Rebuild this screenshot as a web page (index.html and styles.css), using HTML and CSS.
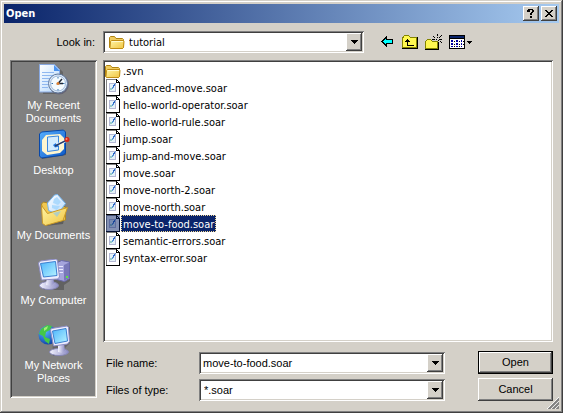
FILE: index.html
```
<!DOCTYPE html>
<html lang="en">
<head>
<meta charset="utf-8">
<title>Open</title>
<link rel="stylesheet" href="styles.css">
</head>
<body>
<svg class="defs" aria-hidden="true">
  <defs>
    <linearGradient id="gold" x1="0" y1="0" x2="1" y2="1"><stop offset="0" stop-color="#fff6a8"/><stop offset="1" stop-color="#f0c440"/></linearGradient>
    <linearGradient id="sheet" x1="0" y1="0" x2="1" y2="1"><stop offset="0" stop-color="#ffffff"/><stop offset="1" stop-color="#b4d8fc"/></linearGradient>
    <linearGradient id="screen" x1="0" y1="0" x2="1" y2="1"><stop offset="0" stop-color="#4cb4fc"/><stop offset="1" stop-color="#b8f4ff"/></linearGradient>
    <linearGradient id="blue" x1="0" y1="0" x2="1" y2="1"><stop offset="0" stop-color="#58b0ff"/><stop offset="1" stop-color="#0c58c8"/></linearGradient>
    <linearGradient id="metal" x1="0" y1="0" x2="1" y2="0"><stop offset="0" stop-color="#f4f4ff"/><stop offset="1" stop-color="#8c8cc4"/></linearGradient>
    <radialGradient id="globe" cx=".35" cy=".3" r=".8"><stop offset="0" stop-color="#58b8ff"/><stop offset="1" stop-color="#0838a0"/></radialGradient>
    <symbol id="folder" viewBox="0 0 16 16">
      <path fill="#f0cc60" stroke="#b08410" d="M.5 13.500V3.500l1-1h4l1.500 2h6.500l1 1v8l-1 1h-12z"/>
      <path fill="url(#gold)" stroke="#c08c14" d="M1.500 7.500l1-1h11.500l1 1-.5 6-1 1h-11.500l-1-1z"/>
      <path fill="none" stroke="#fffbd0" d="M3 7.500h11"/>
    </symbol>
    <symbol id="file" viewBox="0 0 14 17">
      <path fill="#fff" d="M1 1h9l3 3v12H1z"/>
      <path fill="#808080" d="M0 0h10v1H1v15H0z"/>
      <path fill="#000" d="M10 0h1v1h1v1h1v1h1v14H0v-1h13V4h-3z"/>
      <path fill="#fff" d="M11 2h1v1h-1z"/>
      <path fill="#b4b8d4" d="M3 4h7v9H3z"/>
      <path fill="#e4f2f8" d="M4 5h5v7H4z"/>
      <path fill="#2c68c8" d="M8 5h1v2H8zM7 6h1v2H7z"/>
      <path fill="#5c98d8" d="M6 8h2v1H6zM6 9h1v1H6zM9 4h1v1H9z"/>
      <path fill="#98ccc8" d="M4 9h2v2H4z"/>
    </symbol>
    <symbol id="drop" viewBox="0 0 7 4"><path d="M0 0h7v1H0zM1 1h5v1H1zM2 2h3v1H2zM3 3h1v1H3z"/></symbol>
  </defs>
</svg>

<header class="titlebar">
  <h1>Open</h1>
  <button class="btn caption" type="button" aria-label="Help"><svg width="8" height="9" viewBox="0 0 8 9"><path d="M1 0h5v1H1zM0 1h3v2H0zM5 1h2v2H5zM4 3h2v1H4zM3 4h2v2H3zM3 7h2v2H3z"/></svg></button>
  <button class="btn caption" type="button" aria-label="Close"><svg width="8" height="7" viewBox="0 0 8 7"><path d="M0 0h2v1H0zM6 0h2v1H6zM1 1h2v1H1zM5 1h2v1H5zM2 2h4v1H2zM3 3h2v1H3zM2 4h4v1H2zM1 5h2v1H1zM5 5h2v1H5zM0 6h2v1H0zM6 6h2v1H6z"/></svg></button>
</header>

<form class="dialog">
  <label class="lookin-label" for="lookin">Look in:</label>
  <div class="lookin">
    <div class="combo">
      <svg class="combo-icon" width="16" height="16"><use href="#folder"/></svg>
      <select id="lookin" class="with-icon"><option>tutorial</option></select>
      <span class="btn arrow"><svg width="7" height="4"><use href="#drop"/></svg></span>
    </div>
    <div class="tools">
      <button type="button" aria-label="Go to last folder visited"><svg width="14" height="12" viewBox="0 0 14 12"><path d="M5 0h1v3h6v5H6v3H5v-1H4V9H3V8H2V7H1V6H0V5h1V4h1V3h1V2h1V1h1z"/><path fill="#00ffff" d="M4 3h1v1h6v3H5v1H4V7H3V6H2V5h1V4h1z"/></svg></button>
      <button type="button" aria-label="Up one level"><svg width="16" height="14" viewBox="0 0 16 14"><path fill="#848400" d="M2 0h5v1h1v1h7v11H0V2h1V1h1z"/><path fill="#fff850" d="M2 1h5v1h1v1h6v9H1V3h1z"/><path d="M15 2h1v12H0v-1h15zM5 4h1v1h1v1h1v1H6v3h6v1H5V7H3V6h1V5h1z"/></svg></button>
      <button type="button" aria-label="Create new folder"><svg width="17" height="16" viewBox="0 0 17 16"><path fill="#848400" d="M2 5h4v1h1v1h6v8H0V7h1V6h1z"/><path fill="#fff850" d="M2 6h4v1h1v1h5v6H1V7h1z"/><path d="M13 8h1v8H0v-1h13zM12 0h1v2h-1zM8 2h1v1H8zM9 3h1v1H9zM16 1h1v1h-1zM15 2h1v1h-1zM14 3h1v1h-1zM12 3h1v1h-1zM7 5h3v1H7zM11 5h1v1h-1zM14 5h3v1h-3zM13 6h1v1h-1zM15 7h1v1h-1zM16 8h1v1h-1z"/></svg></button>
      <button type="button" aria-label="View menu"><svg width="23" height="14" viewBox="0 0 23 14"><path d="M0 0h16v14H0z"/><path fill="#0a246a" d="M1 1h14v2H1z"/><path fill="#fff" d="M1 4h14v9H1z"/><path fill="#0000a0" d="M2 5h2v2H2zM7 5h2v2H7zM12 5h1v2h-1zM2 8h2v2H2zM7 8h2v2H7zM12 8h1v2h-1zM2 11h2v1H2zM7 11h2v1H7zM12 11h1v1h-1z"/><path d="M5 6h1v1H5zM10 6h1v1h-1zM14 6h1v1h-1zM5 9h1v1H5zM10 9h1v1h-1zM14 9h1v1h-1zM5 11h1v1H5zM10 11h1v1h-1zM18 6h5v1h-5zM19 7h3v1h-3zM20 8h1v1h-1z"/></svg></button>
    </div>
  </div>

  <nav class="places" aria-label="Places">
    <a href="#"><svg width="32" height="32" viewBox="0 0 32 32">
      <path fill="#333" opacity=".35" d="M5 3h15l5 5v22H5z"/>
      <path fill="url(#sheet)" stroke="#88a8e0" d="M1.500.500h15l5 5v22.500h-20z"/>
      <path fill="#4c94f0" d="M16 1v6h6z"/>
      <path stroke="#90b8f0" d="M4 8.500h12M4 11.500h14M4 14.500h14M4 17.500h8M4 20.500h6M4 23.500h6"/>
      <circle cx="21" cy="20.500" r="10" fill="#667"/>
      <circle cx="20" cy="19.500" r="9.500" fill="#dceafa" stroke="#60789c"/>
      <circle cx="20" cy="19.500" r="7.500" fill="#f4fbff" stroke="#a0b8d8"/>
      <path stroke="#3070b0" fill="none" d="M20 13v1.500M20 25v1.500M13.500 19.500H15M25 19.500h1.500"/>
      <path fill="none" stroke="#202838" stroke-width="1.500" d="M24 15l-4 4.500h5"/><circle cx="20" cy="19.500" r="1.500" fill="#e08030"/>
    </svg><span>My Recent<br>Documents</span></a>
    <a href="#"><svg width="32" height="32" viewBox="0 0 32 32">
      <path fill="#333" opacity=".5" d="M3 5l25-2v23l-24 4z"/>
      <path fill="url(#blue)" stroke="#0848a8" d="M1.500 5l2-2 22-2 2 2v21l-2 2-22 3-2-2z"/>
      <path fill="#fff6d0" d="M8 6l14-1 4 4v11l-4 4-13 2-5-4V11z"/>
      <path fill="#d4ecff" stroke="#3c88e0" d="M9.500 8l11-1v14l-11 1.500z"/>
      <path fill="#2478e0" d="M15 16l3-2v1.500h3v2l-4 1z"/>
      <path stroke="#fff" stroke-width="3" d="M20 15.500l8-4"/><path stroke="#283c68" stroke-width="1.500" d="M17 17l11-5.500"/>
      <circle cx="29" cy="10.500" r="2.500" fill="#d82410"/><circle cx="28.500" cy="10" r="1" fill="#ff9078"/>
    </svg><span>Desktop</span></a>
    <a href="#"><svg width="32" height="32" viewBox="0 0 32 32">
      <path fill="#333" opacity=".45" d="M6 11l10-7 13 10-4 16-18 2z"/>
      <path fill="#f0c850" stroke="#b08820" d="M3.500 10l2-2 4 1 2 3 16 1v13l-20 4z"/>
      <path fill="url(#sheet)" stroke="#70b4f0" d="M9.500 9l7-8 3-.5 8 9-8 11-9-4z"/>
      <path fill="#a0d4fc" opacity=".8" d="M16 5l3-2 4 5-3 3-5-2zM14 11l8 1-3 4-5-2z"/>
      <path fill="url(#gold)" stroke="#c89828" d="M3.500 11.500l6 8 20-6-4.500 13-17.500 5-3-2z"/>
      <path fill="#80c4f8" opacity=".6" d="M15 19l8-2-4 6z"/>
    </svg><span>My Documents</span></a>
    <a href="#"><svg width="32" height="32" viewBox="0 0 32 32">
      <path fill="#333" opacity=".4" d="M20 4l12 2v16l-6 4v5H6l-2-6z"/>
      <path fill="#a4a4dc" stroke="#6868a8" d="M18.500 4l5-2.500 8 1.500v16.500l-5 3-8-2z"/>
      <path fill="#7878b8" d="M26 6l5-2.500V19l-5 3z"/><path stroke="#e8e8ff" d="M20 7.500h5M20 10.500h5M20 13.500h5"/><path fill="#58e840" d="M28 17h2v2h-2z"/>
      <ellipse cx="11" cy="26.500" rx="9.500" ry="4" fill="url(#metal)" stroke="#8888b8"/>
      <path fill="url(#metal)" d="M9 17l6-1 1 8-3 3-5-1z"/>
      <path fill="#eeeeff" stroke="#8c8cc4" d="M.500 4l2-2 16-2 1 2 2 16-2 2-16 1z"/>
      <path fill="url(#screen)" stroke="#3c80d0" d="M2.500 4.500l15-2 1.500 14-13.500 1.500z"/>
    </svg><span>My Computer</span></a>
    <a href="#"><svg width="32" height="32" viewBox="0 0 32 32">
      <circle cx="10" cy="11" r="9.500" fill="url(#globe)"/>
      <path fill="#44c848" d="M3 5l6-4 5 1-2 4-4 2-1 5 5 2-1 5-4-3-2-5-4-2z"/><path fill="#a4ec78" d="M6 4l4-2-1 3-3 2z"/>
      <path fill="#333" opacity=".35" d="M14 6l18-3v16l-5 5v7l-12 1z"/>
      <ellipse cx="21" cy="28" rx="9.500" ry="3.500" fill="url(#metal)" stroke="#8888b8"/>
      <path fill="url(#metal)" d="M20 20l6-1 1 7-3 3-4-1z"/>
      <path fill="#eeeeff" stroke="#8c8cc4" d="M12.500 6l1-1.500L29 2l1.500 1.500 1 14-2 2.500-14 2z"/>
      <path fill="url(#screen)" stroke="#3c80d0" d="M14.500 7L28 4.500l1.500 12.500L17 19.500z"/>
    </svg><span>My Network<br>Places</span></a>
  </nav>

  <main>
    <ul class="files" role="listbox" aria-label="Files" tabindex="0">
      <li role="option"><svg width="16" height="16"><use href="#folder"/></svg><span>.svn</span></li>
      <li role="option"><svg class="page" width="14" height="17"><use href="#file"/></svg><span>advanced-move.soar</span></li>
      <li role="option"><svg class="page" width="14" height="17"><use href="#file"/></svg><span>hello-world-operator.soar</span></li>
      <li role="option"><svg class="page" width="14" height="17"><use href="#file"/></svg><span>hello-world-rule.soar</span></li>
      <li role="option"><svg class="page" width="14" height="17"><use href="#file"/></svg><span>jump.soar</span></li>
      <li role="option"><svg class="page" width="14" height="17"><use href="#file"/></svg><span>jump-and-move.soar</span></li>
      <li role="option"><svg class="page" width="14" height="17"><use href="#file"/></svg><span>move.soar</span></li>
      <li role="option"><svg class="page" width="14" height="17"><use href="#file"/></svg><span>move-north-2.soar</span></li>
      <li role="option"><svg class="page" width="14" height="17"><use href="#file"/></svg><span>move-north.soar</span></li>
      <li role="option" aria-selected="true"><svg class="page" width="14" height="17"><use href="#file"/><path class="tint" d="M0 0h14v17H0z"/></svg><span>move-to-food.soar</span></li>
      <li role="option"><svg class="page" width="14" height="17"><use href="#file"/></svg><span>semantic-errors.soar</span></li>
      <li role="option"><svg class="page" width="14" height="17"><use href="#file"/></svg><span>syntax-error.soar</span></li>
    </ul>
    <div class="fields">
      <label for="name">File name:</label>
      <div class="combo">
        <input id="name" type="text" value="move-to-food.soar">
        <button class="btn arrow" type="button" aria-label="Recent names"><svg width="7" height="4"><use href="#drop"/></svg></button>
      </div>
      <button class="btn push default" type="submit">Open</button>
      <label for="type">Files of type:</label>
      <div class="combo">
        <select id="type"><option>*.soar</option></select>
        <span class="btn arrow"><svg width="7" height="4"><use href="#drop"/></svg></span>
      </div>
      <button class="btn push" type="button">Cancel</button>
    </div>
  </main>
</form>
<svg class="grip" width="12" height="12" viewBox="0 0 12 12" aria-hidden="true"><path stroke="#fff" d="M0 12L12 0M4 12l8-8M8 12l4-4"/><path stroke="#808080" stroke-width="2" d="M1.500 12.500l11-11M5.500 12.500l7-7M9.500 12.500l3-3"/></svg>
</body>
</html>
```
FILE: styles.css
```
:root {
  --face: #d4d0c8;
  --shadow: #808080;
  --dark: #404040;
  --navy: #0a246a;
  --tahoma: Tahoma, "DejaVu Sans Condensed", "DejaVu Sans", sans-serif;
  --shell: "Liberation Sans", Arial, sans-serif;
}

* { box-sizing: border-box; }

body {
  position: relative;
  display: flex;
  flex-direction: column;
  min-height: 100vh;
  margin: 0;
  padding: 4px;
  background: var(--face);
  box-shadow: inset -1px -1px var(--dark), inset 1px 1px var(--face),
    inset -2px -2px var(--shadow), inset 2px 2px #fff;
  color: #000;
  font: 11px/13px var(--shell);
}

.defs { position: absolute; width: 0; height: 0; }
svg { display: block; flex: none; }

button, input, select { font: inherit; color: inherit; }

.titlebar {
  display: flex;
  align-items: center;
  gap: 2px;
  height: 19px;
  padding: 0 2px;
  background: linear-gradient(90deg, var(--navy), #a6caf0);
}

h1 {
  flex: 1;
  margin: 0;
  color: #fff;
  font: bold 11px/13px var(--tahoma);
}

.btn {
  display: flex;
  align-items: center;
  justify-content: center;
  padding: 0;
  border: 0;
  background: var(--face);
  box-shadow: inset -1px -1px var(--dark), inset 1px 1px #fff, inset -2px -2px var(--shadow);
}

.caption { width: 16px; height: 15px; padding: 0 1px 1px 0; }

.dialog {
  flex: 1;
  display: grid;
  grid-template-columns: 87px 1fr;
  grid-template-rows: 22px 1fr;
  gap: 7px 6px;
  padding: 8px 6px;
}

.lookin-label { align-self: center; justify-self: end; padding-right: 2px; }

.lookin { display: flex; gap: 17px; }
.lookin .combo { flex: 1; }

.combo {
  display: grid;
  grid-template-columns: 1fr 16px;
  height: 22px;
  padding: 2px;
  background: #fff;
  box-shadow: inset 1px 1px var(--shadow), inset -1px -1px #fff,
    inset 2px 2px var(--dark), inset -2px -2px var(--face);
}

.combo input, .combo select {
  grid-area: 1 / 1;
  min-width: 0;
  margin: 0;
  padding: 1px 2px 0;
  border: 0;
  outline: 0;
  appearance: none;
  background: transparent;
}

.combo select { grid-column: 1 / 3; padding-left: 3px; }
.combo select.with-icon { padding-left: 24px; font-family: var(--tahoma); }
.combo .arrow { grid-area: 1 / 2; }
.combo span.arrow { pointer-events: none; }
.combo-icon { grid-area: 1 / 1; align-self: center; margin-left: 4px; }

.tools {
  display: flex;
  align-items: center;
  gap: 7px;
  width: 172px;
}

.tools button { padding: 0; border: 0; background: none; }

.places {
  display: grid;
  grid-auto-rows: 65px;
  align-content: start;
  margin-bottom: 3px;
  padding: 2px;
  background: var(--shadow);
  box-shadow: inset 1px 1px var(--shadow), inset -1px -1px #fff,
    inset 2px 2px var(--dark), inset -2px -2px var(--face);
}

.places a {
  display: flex;
  flex-direction: column;
  align-items: center;
  gap: 3px;
  padding-top: 2px;
  color: #fff;
  text-align: center;
  text-decoration: none;
}

main { display: flex; flex-direction: column; gap: 9px; min-width: 0; }

.files {
  flex: 1;
  margin: 0;
  padding: 2px;
  outline: 0;
  list-style: none;
  background: #fff;
  box-shadow: inset 1px 1px var(--shadow), inset -1px -1px #fff,
    inset 2px 2px var(--dark), inset -2px -2px var(--face);
  font-family: var(--tahoma);
}

.files li { display: flex; align-items: center; height: 17px; }
.files .page { margin: 0 1px; }
.files span { padding: 3px 2px 1px; }

.files [aria-selected="true"] span {
  outline: 1px dotted #f5db95;
  outline-offset: -1px;
  background: var(--navy);
  color: #fff;
}

.tint { fill: var(--navy); opacity: .5; }

.fields {
  display: grid;
  grid-template-columns: 93px 1fr 75px;
  gap: 4px 3px;
  align-items: center;
}

.fields label { padding: 2px 0 0 3px; }
.fields .combo { margin-right: 30px; }
.push { height: 23px; }
.default { border: 1px solid #000; }

.grip { position: absolute; right: 4px; bottom: 4px; }
```
